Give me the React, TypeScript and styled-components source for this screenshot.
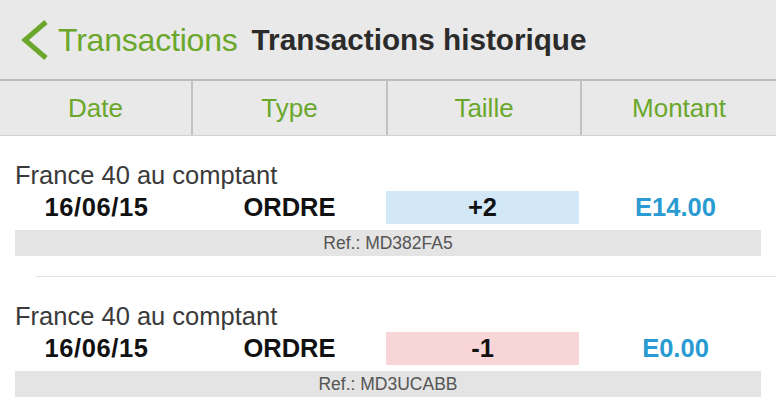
import React from "react";
import styled, { createGlobalStyle } from "styled-components";

const Global = createGlobalStyle`
  html, body { margin: 0; padding: 0; background: #ffffff; }
  body { font-family: "Liberation Sans", Arial, sans-serif; width: 776px; height: 411px; overflow: hidden; }
`;

const GREEN = "#6aa72b";

const Page = styled.div`
  width: 776px;
  display: flex;
  flex-direction: column;
`;

const NavBar = styled.div`
  height: 79px;
  background: #e9e9e9;
  border-bottom: 2px solid #bdbdbd;
  display: flex;
  align-items: center;
  padding-left: 20px;
`;

const BackLabel = styled.span`
  margin-left: 10px;
  margin-top: 1px;
  font-size: 32px;
  color: ${GREEN};
  letter-spacing: -0.2px;
`;

const Title = styled.span`
  margin-left: 14px;
  margin-top: 1px;
  font-size: 29.7px;
  font-weight: 700;
  color: #2b2b2b;
`;

const HeaderRow = styled.div`
  height: 54px;
  background: #e9e9e9;
  border-bottom: 1px solid #d2d2d2;
  display: grid;
  grid-template-columns: 191px 195px 194px 1fr;
`;

const HeaderCell = styled.div<{ $divider?: boolean }>`
  display: flex;
  align-items: center;
  justify-content: center;
  padding-top: 1px;
  font-size: 26px;
  color: ${GREEN};
  border-left: ${(p) => (p.$divider ? "2px solid #c2c2c2" : "none")};
`;

const Card = styled.div`
  padding: 25px 0 20px;
  display: flex;
  flex-direction: column;
`;

const Instrument = styled.div`
  margin-left: 15px;
  font-size: 25.5px;
  line-height: 28px;
  color: #3a3a3a;
`;

const DataRow = styled.div`
  margin-top: 2px;
  height: 33px;
  display: grid;
  grid-template-columns: repeat(4, 193px);
`;

const Cell = styled.div<{ $color?: string; $bg?: string; $spacing?: number }>`
  display: flex;
  align-items: center;
  justify-content: center;
  font-size: 25.5px;
  font-weight: 700;
  letter-spacing: ${(p) => p.$spacing ?? 0}px;
  color: ${(p) => p.$color || "#111"};
  background: ${(p) => p.$bg || "transparent"};
`;

const RefBar = styled.div`
  margin: 6px 15px 0;
  height: 26px;
  background: #e4e4e4;
  display: flex;
  align-items: center;
  justify-content: center;
  font-size: 17.5px;
  color: #555;
`;

const Divider = styled.div`
  margin-left: 36px;
  height: 1px;
  background: #e2e2e2;
`;

const Chevron = () => (
  <svg width="28" height="40" viewBox="0 0 28 40">
    <polyline points="26,2 5,20 26,38" fill="none" stroke={GREEN} strokeWidth="5" />
  </svg>
);

type Tx = { date: string; type: string; size: string; positive: boolean; amount: string; ref: string };

const txs: Tx[] = [
  { date: "16/06/15", type: "ORDRE", size: "+2", positive: true, amount: "E14.00", ref: "Ref.: MD382FA5" },
  { date: "16/06/15", type: "ORDRE", size: "-1", positive: false, amount: "E0.00", ref: "Ref.: MD3UCABB" },
];

export default function App() {
  return (
    <>
      <Global />
      <Page>
        <NavBar>
          <Chevron />
          <BackLabel>Transactions</BackLabel>
          <Title>Transactions historique</Title>
        </NavBar>
        <HeaderRow>
          <HeaderCell>Date</HeaderCell>
          <HeaderCell $divider>Type</HeaderCell>
          <HeaderCell $divider>Taille</HeaderCell>
          <HeaderCell $divider>Montant</HeaderCell>
        </HeaderRow>
        {txs.map((t, i) => (
          <React.Fragment key={i}>
            {i > 0 && <Divider />}
            <Card>
              <Instrument>France 40 au comptant</Instrument>
              <DataRow>
                <Cell $spacing={0.6}>{t.date}</Cell>
                <Cell>{t.type}</Cell>
                <Cell $bg={t.positive ? "#d3e8f6" : "#f8d6d8"}>{t.size}</Cell>
                <Cell $color="#2a9bd2">{t.amount}</Cell>
              </DataRow>
              <RefBar>{t.ref}</RefBar>
            </Card>
          </React.Fragment>
        ))}
      </Page>
    </>
  );
}
